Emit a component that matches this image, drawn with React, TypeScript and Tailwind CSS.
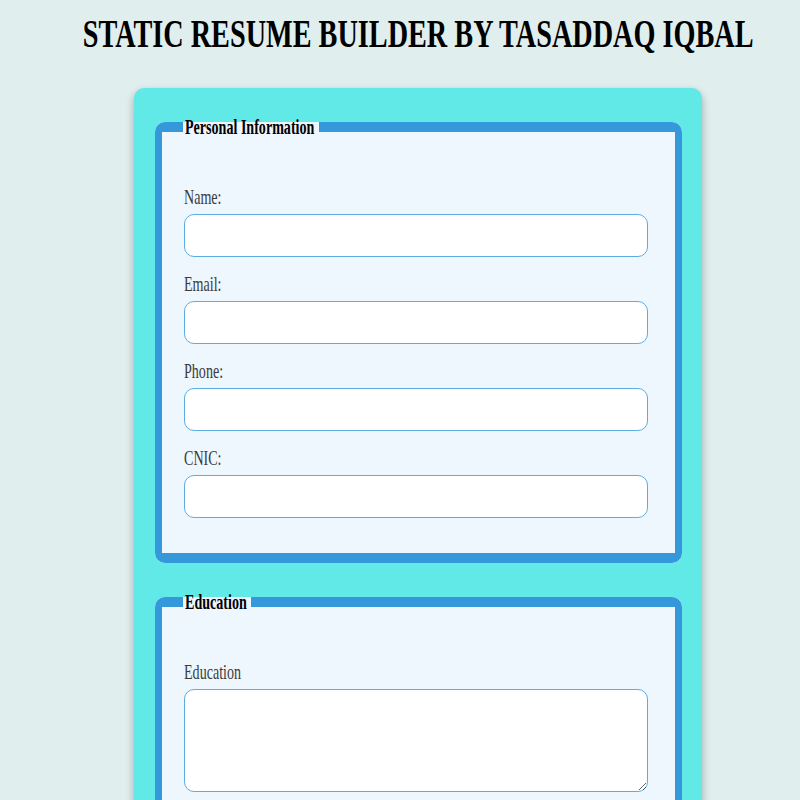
import React from 'react';

interface Field {
  label: string;
}

const personalFields: Field[] = [
  { label: 'Name:' },
  { label: 'Email:' },
  { label: 'Phone:' },
  { label: 'CNIC:' },
];

const serif = "font-['Liberation_Serif','Times_New_Roman',serif]";

const Label: React.FC<{ text: string }> = ({ text }) => (
  <label className="block leading-[24px] mb-[5px] text-[21px] text-[#3a3a3a] whitespace-nowrap">
    <span className="inline-block origin-left scale-x-[0.67]">{text}</span>
  </label>
);

const Section: React.FC<{ title: string; legendWidth: string; children: React.ReactNode; className?: string }> = ({
  title,
  legendWidth,
  children,
  className,
}) => (
  <fieldset
    className={`rounded-[10px] border-x-[7px] border-y-[10px] border-solid border-[#3498db] bg-[#eef6fe] pt-[46px] pl-[22px] pr-[27px] ${className ?? ''}`}
  >
    <legend className={`${legendWidth} -ml-[1px] pl-[2px] pr-[2px] leading-[24px] text-[21px] font-bold text-black whitespace-nowrap`}>
      <span className="inline-block origin-left scale-x-[0.67]">{title}</span>
    </legend>
    {children}
  </fieldset>
);

const App: React.FC = () => {
  return (
    <div className={`min-h-screen bg-[#e1eeee] pt-[11px] ${serif}`}>
      <div className="pl-[36px]">
        <h1 className="flex h-[46px] justify-center text-[40px] leading-[46px] font-bold text-black whitespace-nowrap">
          <span className="inline-block shrink-0 origin-center scale-x-[0.706]">STATIC RESUME BUILDER BY TASADDAQ IQBAL</span>
        </h1>
        <div className="mx-auto mt-[31px] w-[568px] rounded-[10px] bg-[#61e9e8] pt-[27px] pl-[21px] pr-[20px] pb-[40px] shadow-[0_4px_8px_rgba(0,0,0,0.3)]">
          <Section title="Personal Information" legendWidth="w-[136px]" className="pb-[20px]">
            {personalFields.map((f) => (
              <div key={f.label} className="mb-[15px]">
                <Label text={f.label} />
                <input
                  type="text"
                  className="block h-[43px] w-full rounded-[10px] border border-[#5dade2] bg-white px-3"
                />
              </div>
            ))}
          </Section>
          <Section title="Education" legendWidth="w-[68px]" className="mt-[27px] pb-[20px]">
            <div className="mb-[15px]">
              <Label text="Education" />
              <textarea className="block h-[103px] w-full rounded-[10px] border border-[#5dade2] bg-white px-3 py-2" />
            </div>
          </Section>
        </div>
      </div>
    </div>
  );
};

export default App;
